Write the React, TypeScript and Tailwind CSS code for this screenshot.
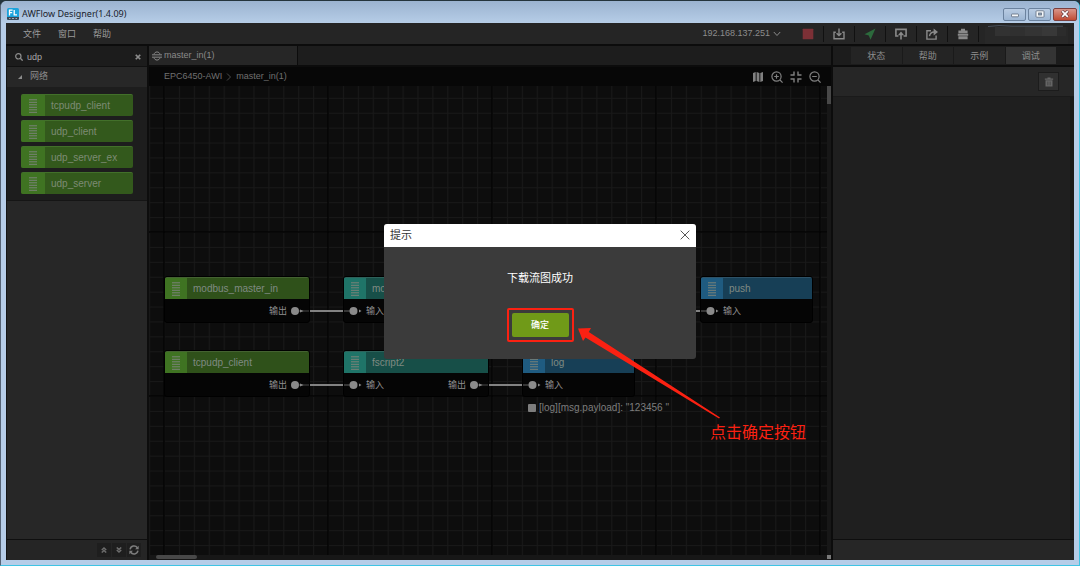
import type { ReactNode } from "react";

const fontStack = "font-['Liberation_Sans','Noto_Sans_CJK_SC',sans-serif]";

type Tone = "green" | "teal" | "blue";

const tones: Record<Tone, { head: string; icon: string }> = {
  green: { head: "bg-[#2f511a]", icon: "bg-[#3f7322]" },
  teal: { head: "bg-[#174f48]", icon: "bg-[#1f7468]" },
  blue: { head: "bg-[#173f56]", icon: "bg-[#1f5b80]" },
};

function Bars() {
  return (
    <svg className="h-3.5 w-2" viewBox="0 0 8 14" fill="none" stroke="#7b8378" strokeWidth="1">
      <path d="M0 .8h8M0 3.3h8M0 5.8h8M0 8.3h8M0 10.8h8M0 13.3h8" />
    </svg>
  );
}

function Logo() {
  return (
    <svg className="h-3 w-3" viewBox="0 0 12 12">
      <rect width="12" height="12" rx="1.5" fill="#1ba3dc" />
      <path d="M0 9h12v1.500a1.500 1.500 0 0 1-1.500 1.500h-9A1.500 1.500 0 0 1 0 10.500z" fill="#3c4a58" />
      <path d="M2.500 7.500V2.200H5.600M2.500 4.700H5.200M7.200 2v4.800H10" stroke="#fff" strokeWidth="1.300" fill="none" />
      <path d="M2 10.500h1.500M5 10.500h2M8.500 10.500H10" stroke="#b8c4d0" strokeWidth=".8" />
    </svg>
  );
}

function Icon({ children, className = "h-3 w-3" }: { children: ReactNode; className?: string }) {
  return (
    <svg
      className={className}
      viewBox="0 0 12 12"
      fill="none"
      stroke="currentColor"
      strokeWidth="1.4"
      aria-hidden="true"
    >
      {children}
    </svg>
  );
}

function TitleBar() {
  return (
    <header className="flex h-[22px] items-center justify-between bg-linear-to-b from-[#9bb3d0] to-[#b6cde7] pr-px pl-1.5">
      <div className="flex items-center gap-[3px] pt-1">
        <Logo />
        <h1 className="font-['Noto_Sans',sans-serif] text-[9px] leading-3 text-[#1a222c]">
          AWFlow Designer(1.4.09)
        </h1>
      </div>
      <div className="flex gap-0.5 pt-1">
        <button
          aria-label="最小化"
          className="flex h-[13px] w-[23px] items-center justify-center rounded-xs border border-[#6b829e] bg-linear-to-b from-[#b9cce3] to-[#9db6d3]"
        >
          <svg className="h-2 w-2.5" viewBox="0 0 10 8">
            <rect x="1.500" y="4" width="7" height="2.800" rx=".6" fill="#f4f7fa" stroke="#5d6b7c" strokeWidth=".8" />
          </svg>
        </button>
        <button
          aria-label="最大化"
          className="flex h-[13px] w-[23px] items-center justify-center rounded-xs border border-[#6b829e] bg-linear-to-b from-[#b9cce3] to-[#9db6d3]"
        >
          <svg className="h-2 w-2.5" viewBox="0 0 10 8">
            <rect x="1" y=".8" width="8" height="6.400" rx=".8" fill="#f4f7fa" stroke="#5d6b7c" strokeWidth=".8" />
            <rect x="3.600" y="3" width="2.800" height="2" fill="#8fa5c0" stroke="#5d6b7c" strokeWidth=".8" />
          </svg>
        </button>
        <button
          aria-label="关闭窗口"
          className="mr-px flex h-[13px] w-6 items-center justify-center rounded-xs border border-[#7c3e3c] bg-linear-to-b from-[#d8958a] to-[#bf4a32]"
        >
          <svg className="h-2 w-2.5" viewBox="0 0 10 8">
            <path d="M2 1l6 6M8 1L2 7" stroke="#5f3a3c" strokeWidth="3" />
            <path d="M2.200 1.200l5.600 5.600M7.800 1.200L2.200 6.800" stroke="#fff" strokeWidth="1.700" />
          </svg>
        </button>
      </div>
    </header>
  );
}

const tools: { label: string; color: string; icon: ReactNode }[] = [
  {
    label: "停止",
    color: "text-[#7c3036]",
    icon: <rect x=".7" y=".7" width="10.600" height="10.600" rx=".5" fill="currentColor" stroke="none" />,
  },
  {
    label: "下载",
    color: "text-[#8a8a8a]",
    icon: <path d="M2.800 4.200H1v6.600h10V4.200H9.200M6 .5v6.800M3.600 5.200L6 7.600l2.400-2.400" />,
  },
  {
    label: "发送",
    color: "text-[#2c6a3c]",
    icon: <path d="M11.500.5L.5 6.200l4.300 1.200 1.700 4.300z" fill="currentColor" stroke="none" />,
  },
  {
    label: "上传",
    color: "text-[#8a8a8a]",
    icon: (
      <>
        <path d="M3.400 8H.9V1.400h10.200V8H8.600M6 11.600V6" strokeWidth="1.600" />
        <path d="M6 3.400l3.100 3.800H2.900z" fill="currentColor" stroke="none" />
      </>
    ),
  },
  {
    label: "导出",
    color: "text-[#8a8a8a]",
    icon: (
      <>
        <path d="M5 2.800H.9v8.300h9.200V7.600M3.500 8.200c.4-3 2-4.200 4.700-4.200" />
        <path d="M7.600.4l4.400 3.500-4.400 3.500z" fill="currentColor" stroke="none" />
      </>
    ),
  },
  {
    label: "设备",
    color: "text-[#8a8a8a]",
    icon: (
      <path
        d="M4 .8h4v1.600h2.600v2.800H1.400V2.400H4zM.8 5.800h10.400v2H.8zM1.400 8.300h9.200v3H1.400z"
        fill="currentColor"
        stroke="none"
      />
    ),
  },
];

function MenuBar() {
  return (
    <div className="flex h-[23px] items-center justify-between border-b-2 border-[#0c0c0c] bg-[#252525]">
      <nav className="flex gap-[17px] pl-[17px] text-[9px] leading-3 text-[#9a9a9a]">
        <button>文件</button>
        <button>窗口</button>
        <button>帮助</button>
      </nav>
      <div className="flex items-center text-[9px] text-[#8c8c8c]">
        <button className="mr-3 flex items-center gap-[3px]">
          192.168.137.251
          <svg className="h-1.5 w-2" viewBox="0 0 8 6" fill="none" stroke="currentColor">
            <path d="M.8 1l3.200 3.500L7.200 1" />
          </svg>
        </button>
        <div className="flex">
          {tools.map((t) => (
            <button
              key={t.label}
              aria-label={t.label}
              className={`${t.color} flex h-4 w-[31px] items-center justify-center border-r border-[#111]`}
            >
              <Icon>{t.icon}</Icon>
            </button>
          ))}
        </div>
        <svg className="h-5 w-[95px]" viewBox="0 0 95 20" aria-hidden="true">
          <rect x="6" y="3" width="83" height="17" fill="#282828" />
          <rect x="16" y="3" width="15" height="9" fill="#323232" />
          <rect x="31" y="3" width="15" height="9" fill="#303030" />
          <rect x="46" y="3" width="17" height="9" fill="#343434" />
          <rect x="63" y="3" width="15" height="9" fill="#383838" />
          <rect x="78" y="3" width="9" height="9" fill="#2c2c2c" />
          <path d="M9 2.500Q19 .8 33 2.200L84 2.200" stroke="#49515b" fill="none" strokeWidth="1" />
        </svg>
      </div>
    </div>
  );
}

function Palette() {
  return (
    <aside className="flex w-[142px] shrink-0 flex-col border-r-2 border-[#0d0d0d] bg-[#272727]">
      <div className="flex h-[21px] items-center gap-1 border-b border-[#111] bg-[#1c1c1c] pt-0.5 pr-1.5 pl-2 text-[#8c8c8c]">
        <Icon className="h-2 w-2 shrink-0">
          <circle cx="5" cy="5" r="4" strokeWidth="1.8" />
          <path d="M8 8l3.500 3.500" strokeWidth="2" />
        </Icon>
        <input
          aria-label="搜索节点"
          defaultValue="udp"
          className="min-w-0 flex-1 bg-transparent text-[9px] leading-3 text-[#a8a8a8] outline-none"
        />
        <button aria-label="清除" className="flex">
          <Icon className="h-1.5 w-1.5">
            <path d="M1.500 1.500l9 9M10.500 1.500l-9 9" strokeWidth="3.500" />
          </Icon>
        </button>
      </div>
      <button className="flex h-5 items-center gap-2 bg-[#272727] pl-[11px] text-[9px] text-[#8c8c8c]">
        <svg className="h-1 w-1" viewBox="0 0 4 4">
          <path d="M4 0v4H0z" fill="currentColor" />
        </svg>
        网络
      </button>
      <ul className="flex flex-col gap-1 border-b border-[#151515] bg-[#1d1d1d] pt-[7px] pr-3.5 pb-1.5 pl-3.5">
        {["tcpudp_client", "udp_client", "udp_server_ex", "udp_server"].map((n) => (
          <li
            key={n}
            className="flex h-[22px] items-stretch overflow-hidden rounded-xs border-t border-[#42702a] bg-[#33591c] text-[10px] text-[#7d8b74]"
          >
            <span className="flex w-6 items-center justify-center bg-[#3f7322]">
              <Bars />
            </span>
            <span className="self-center pl-1.5">{n}</span>
          </li>
        ))}
      </ul>
      <div className="mt-auto flex h-[21px] items-center justify-end border-t border-[#0f0f0f] bg-[#252525] pr-1.5 text-[#6c6c6c]">
        <div className="flex h-3.5 gap-px">
          <button aria-label="全部折叠" className="flex w-3.5 items-center justify-center bg-[#1e1e1e]">
            <Icon className="h-1.5 w-1.5">
              <path d="M1.500 6L6 2l4.500 4M1.500 11L6 7l4.500 4" strokeWidth="3" />
            </Icon>
          </button>
          <button aria-label="全部展开" className="flex w-3.5 items-center justify-center bg-[#1e1e1e]">
            <Icon className="h-1.5 w-1.5">
              <path d="M1.500 1L6 5l4.500-4M1.500 6L6 10l4.500-4" strokeWidth="3" />
            </Icon>
          </button>
          <button aria-label="刷新" className="flex w-3.5 items-center justify-center bg-[#1e1e1e] text-[#7d7d7d]">
            <Icon className="h-2.5 w-2.5">
              <path d="M1.300 5.200A4.800 4.800 0 0 1 10 3.300M10.700 6.800A4.800 4.800 0 0 1 2 8.700" strokeWidth="1.800" />
              <path d="M11.600.8v4.300H7.300zM.4 11.200V6.900h4.300z" fill="currentColor" stroke="none" />
            </Icon>
          </button>
        </div>
      </div>
    </aside>
  );
}

type FlowNode = {
  name: string;
  tone: Tone;
  place: string;
  input?: boolean;
  output?: boolean;
};

const nodes: FlowNode[] = [
  { name: "modbus_master_in", tone: "green", place: "left-[15px] top-[190px] w-[146px]", output: true },
  { name: "modbus_parse", tone: "teal", place: "left-[194px] top-[190px] w-[146px]", input: true, output: true },
  { name: "push", tone: "blue", place: "left-[551px] top-[190px] w-[113px]", input: true },
  { name: "tcpudp_client", tone: "green", place: "left-[15px] top-[264px] w-[146px]", output: true },
  { name: "fscript2", tone: "teal", place: "left-[194px] top-[264px] w-[146px]", input: true, output: true },
  { name: "log", tone: "blue", place: "left-[373px] top-[264px] w-[113px]", input: true },
];

function NodeCard({ node }: { node: FlowNode }) {
  const tone = tones[node.tone];
  return (
    <div className={`${node.place} absolute overflow-hidden rounded-[3px] border border-black bg-[#050505]`}>
      <div className={`${tone.head} flex h-[22px] items-stretch border-t border-white/10`}>
        <span className={`${tone.icon} flex w-[22px] items-center justify-center`}>
          <Bars />
        </span>
        <span className="self-center pl-1.5 text-[10px] leading-3 text-[#7f8a82]">{node.name}</span>
      </div>
      <div className="flex h-[23px] items-center justify-between text-[9px] leading-3 text-[#8f8f8f]">
        <span className="flex items-center gap-1">
          {node.input && (
            <>
              <svg className="h-2 w-[18px]" viewBox="0 0 18 8">
                <path d="M0 4h6" stroke="#666" />
                <circle cx="9.500" cy="4" r="4" fill="#8a8a8a" />
                <path d="M15 2.500L17.500 4 15 5.500z" fill="#8a8a8a" />
              </svg>
              输入
            </>
          )}
        </span>
        <span className="flex items-center gap-1">
          {node.output && (
            <>
              输出
              <svg className="h-2 w-[18px]" viewBox="0 0 18 8">
                <circle cx="4" cy="4" r="4" fill="#8a8a8a" />
                <path d="M8 4h10" stroke="#4a4a4a" />
                <path d="M9 2.500L12.500 4 9 5.500z" fill="#8a8a8a" />
              </svg>
            </>
          )}
        </span>
      </div>
    </div>
  );
}

function Canvas() {
  return (
    <div className="relative min-h-0 flex-1 overflow-hidden bg-[#171717]">
      <div className="absolute top-0 right-1 bottom-[5px] left-0 overflow-hidden bg-[#0d0d0d]">
        <svg className="h-full w-full" aria-hidden="true">
          <defs>
            <pattern id="minor" x="15" y="-18" width="14.909" height="14.909" patternUnits="userSpaceOnUse">
              <path d="M.5 0V15M0 .5H15" stroke="#191919" strokeWidth="1" fill="none" />
            </pattern>
            <pattern id="major" x="14" y="-19" width="164" height="164" patternUnits="userSpaceOnUse">
              <path d="M1 0V164M0 1H164" stroke="#030303" strokeWidth="1.500" fill="none" />
            </pattern>
          </defs>
          <rect width="100%" height="100%" fill="url(#minor)" />
          <rect width="100%" height="100%" fill="url(#major)" />
        </svg>
        {nodes.map((n) => (
          <NodeCard key={n.name} node={n} />
        ))}
        <svg className="absolute top-0 left-0 h-[320px] w-[600px]" aria-hidden="true">
          <path d="M161 225h33M340 225h211M161 299h33M340 299h33" stroke="#828282" strokeWidth="2" />
        </svg>
        <div className="absolute top-[315px] left-[379px] flex items-center gap-[3px] text-[10px] leading-3.5 text-[#7d7d7d]">
          <span className="h-2 w-2 rounded-[1px] bg-[#7d7d7d]" />
          <span className="whitespace-pre">[log][msg.payload]: "123456 "</span>
        </div>
      </div>
      <div className="absolute top-0 right-0 h-[18px] w-1 bg-[#484848]" />
      <div className="absolute bottom-px left-[7px] h-1 w-[41px] rounded-xs bg-[#484848]" />
      <div className="absolute right-0 bottom-px h-1 w-1 bg-[#7a7a7a]" />
    </div>
  );
}

function Editor() {
  return (
    <main className="flex min-w-0 flex-1 flex-col">
      <div className="flex h-[21px] border-b-2 border-[#0c0c0c] bg-[#1d1d1d]">
        <button className="flex w-[149px] items-center gap-0.5 border-r border-[#0c0c0c] bg-[#262626] pl-[3px] text-[9px] text-[#8a8a8a]">
          <Icon className="h-2.5 w-2.5">
            <path d="M2.500 4C3 .2 9 .2 9.500 4M0 4.600h12M0 7.400h12M2.500 8C3 11.800 9 11.800 9.500 8" strokeWidth="1.200" />
          </Icon>
          master_in(1)
        </button>
      </div>
      <div className="flex h-[19px] items-center justify-between bg-[#070707] pr-2.5 pl-[15px] text-[9px] text-[#707070]">
        <div className="flex items-center gap-1">
          <a href="#device">EPC6450-AWI</a>
          <svg className="h-2 w-1.5" viewBox="0 0 6 8" fill="none" stroke="#4a4a4a">
            <path d="M1 .5L4.500 4 1 7.500" />
          </svg>
          <a href="#flow">master_in(1)</a>
        </div>
        <div className="flex gap-[7px] text-[#808080]">
          <button aria-label="地图">
            <Icon>
              <path d="M1 2l2.700-1v9L1 11zM4.600 1l2.800 1v9l-2.800-1zM8.300 2L11 1v9l-2.700 1z" fill="currentColor" stroke="none" />
            </Icon>
          </button>
          <button aria-label="放大">
            <Icon>
              <circle cx="5.500" cy="5.500" r="4.600" strokeWidth="1.200" />
              <path d="M9 9l2.600 2.600M3.200 5.500h4.600M5.500 3.200v4.600" strokeWidth="1.200" />
            </Icon>
          </button>
          <button aria-label="适应">
            <Icon>
              <path d="M.5 4h3.500V.5M11.500 4H8V.5M.5 8h3.500v3.500M11.500 8H8v3.500" />
            </Icon>
          </button>
          <button aria-label="缩小">
            <Icon>
              <circle cx="5.500" cy="5.500" r="4.600" strokeWidth="1.200" />
              <path d="M9 9l2.600 2.600M3.200 5.500h4.600" strokeWidth="1.200" />
            </Icon>
          </button>
        </div>
      </div>
      <Canvas />
    </main>
  );
}

function Inspector() {
  return (
    <aside className="flex w-[243px] shrink-0 flex-col border-l-2 border-[#0c0c0c] bg-[#1f1f1f]">
      <div className="flex h-[21px] border-b-2 border-[#0c0c0c] bg-[#1c1c1c] pt-px pr-[18px] pb-px pl-[18px] text-[9px] leading-3 text-[#8f8f8f]">
        <button className="flex-1 border-r border-[#1a1a1a] bg-[#242424]">状态</button>
        <button className="flex-1 border-r border-[#1a1a1a] bg-[#242424]">帮助</button>
        <button className="flex-1 border-r border-[#1a1a1a] bg-[#242424]">示例</button>
        <button className="flex-1 bg-[#343434]">调试</button>
      </div>
      <div className="flex h-[30px] items-center justify-end border-b border-[#1a1a1a] bg-[#262626] pr-[15px]">
        <button
          aria-label="清空"
          className="flex h-[19px] w-[21px] items-center justify-center border border-[#1c1c1c] bg-[#303030] text-[#656565]"
        >
          <Icon className="h-2.5 w-2.5">
            <path
              d="M4.200.5h3.600v1.300H11v1.500H1V1.800h3.200zM1.800 4h8.400v7.500H1.800z"
              fill="currentColor"
              stroke="none"
            />
            <path d="M4.200 5.500v4.500M6 5.500v4.500M7.800 5.500v4.500" stroke="#444" strokeWidth=".7" />
          </Icon>
        </button>
      </div>
      <div className="flex-1 border-r-4 border-[#191919]" />
      <div className="h-[21px] border-t border-[#0e0e0e] bg-[#262626]" />
    </aside>
  );
}

function SuccessDialog() {
  return (
    <div className="absolute inset-0 flex items-center justify-center">
      <section role="dialog" aria-labelledby="dialog-title" className="relative w-[312px] rounded-[3px] bg-[#3b3b3b]">
        <div className="flex h-[23px] items-center justify-between rounded-t-[3px] bg-white pr-1.5 pb-px pl-1.5">
          <h2 id="dialog-title" className="text-[11px] leading-4 text-[#333]">
            提示
          </h2>
          <button aria-label="关闭">
            <Icon className="h-2.5 w-2.5 text-[#555]">
              <path d="M.8.8l10.400 10.400M11.200.8L.8 11.200" strokeWidth="1.2" />
            </Icon>
          </button>
        </div>
        <div className="flex flex-col items-center gap-[22px] pt-[23px] pb-[17px]">
          <p className="text-[11px] leading-4 text-white">下载流图成功</p>
          <div className="rounded-xs border-2 border-[#fb2112] p-[3px]">
            <button className="block h-6 w-[57px] rounded-xs bg-[#709a18] text-[9px] leading-6 font-medium text-white">
              确定
            </button>
          </div>
        </div>
        <svg className="absolute top-[103px] left-48 h-24 w-36" viewBox="0 0 144 96" aria-hidden="true">
          <path d="M2 1.500L15 1l-2.200 4L144 90.500 143 91.500 9.500 10.500 7 14z" fill="#fb2112" />
        </svg>
        <p className="absolute top-[199px] left-[326px] text-base leading-5 whitespace-nowrap text-[#fb2112]">
          点击确定按钮
        </p>
      </section>
    </div>
  );
}

export default function App() {
  return (
    <div className={`${fontStack} h-screen min-h-96 overflow-hidden bg-[#24343c] pt-px`}>
      <div className="flex h-full flex-col rounded-t-md border-r border-b border-l border-l-[#566476] border-r-[#3fc4e4] border-b-[#3fc4e4] bg-[#b6cde8]">
        <div className="overflow-hidden rounded-t-md">
          <TitleBar />
        </div>
        <div className="relative mr-[5px] mb-[5px] ml-[5px] flex min-h-0 flex-1 flex-col bg-[#141414]">
          <MenuBar />
          <div className="flex min-h-0 flex-1 pl-px">
            <Palette />
            <Editor />
            <Inspector />
          </div>
          <SuccessDialog />
        </div>
      </div>
    </div>
  );
}
